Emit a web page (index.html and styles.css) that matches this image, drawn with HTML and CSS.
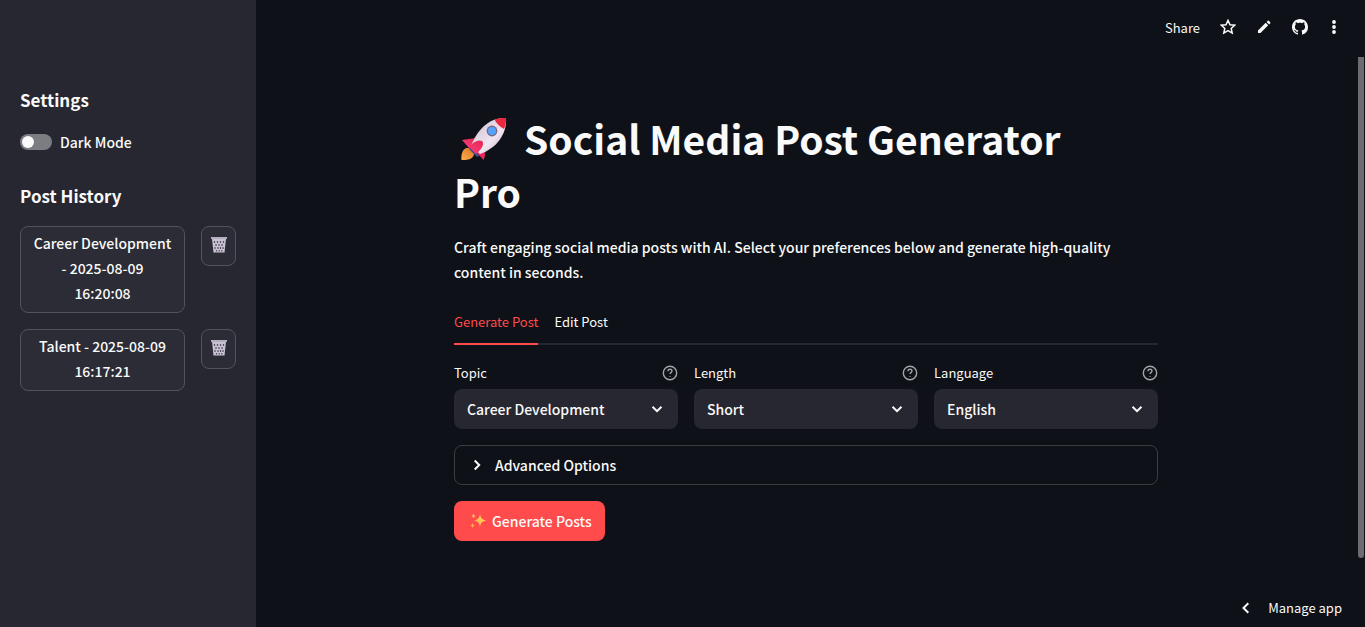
FILE: index.html
```html
<!DOCTYPE html>
<html lang="en">
<head>
<meta charset="utf-8">
<title>Social Media Post Generator Pro</title>
<link rel="stylesheet" href="styles.css">
</head>
<body>
<svg class="defs" width="0" height="0" aria-hidden="true">
  <defs>
    <linearGradient id="body" x1="0" y1="0" x2="1" y2="1"><stop offset="0.2" stop-color="#d9c8d8"/><stop offset="0.6" stop-color="#f0e5f0"/><stop offset="1" stop-color="#b9a8c0"/></linearGradient>
    <linearGradient id="flame" x1="1" y1="0" x2="0" y2="1"><stop offset="0" stop-color="#d9702a"/><stop offset="1" stop-color="#ffb04a"/></linearGradient>
    <linearGradient id="fin" x1="1" y1="0" x2="0" y2="1"><stop offset="0" stop-color="#e2284f"/><stop offset="1" stop-color="#ff3d83"/></linearGradient>
    <linearGradient id="spark" x1="1" y1="0" x2="0" y2="1"><stop offset="0" stop-color="#ffe45c"/><stop offset="1" stop-color="#ff9f4d"/></linearGradient>
    <symbol id="help" viewBox="0 0 16 16"><circle cx="8" cy="8" r="6.7"/><path d="M6 6.2C6 4.9 6.9 4.3 8 4.3s2 .7 2 1.8c0 1.4-2 1.600-2 3"/><path d="M8 11v.8"/></symbol>
    <symbol id="down" viewBox="0 0 12 12"><path d="M1.500 3.700 6 8.200l4.500-4.500"/></symbol>
    <symbol id="trash" viewBox="0 0 18 18">
      <path d="M2 2.500h14l-1.500 14h-11z" fill="#c9c2d4"/>
      <path d="M1 1h16v2H1z" fill="#b5aec0"/>
      <path d="M4.500 5v2M7.500 5v2M10.500 5v2M13.500 5v2M6 8v2M9 8v2M12 8v2M5 11v2M8 11v2M10.500 11v2M13 11v2M6.500 14v1.500M9.200 14v1.500M11.800 14v1.500" stroke="#55505f" stroke-width="1.200"/>
    </symbol>
  </defs>
</svg>
<div class="app">
  <aside class="sidebar">
    <h2 class="side-title">Settings</h2>
    <label class="toggle"><input type="checkbox" class="switch">Dark Mode</label>
    <h2 class="side-title">Post History</h2>
    <div class="history">
      <div class="history-row">
        <button class="btn history-item">Career Development - 2025-08-09 <span class="time">16:20:08</span></button>
        <button class="btn delete" aria-label="Delete post"><svg width="18" height="18"><use href="#trash"/></svg></button>
      </div>
      <div class="history-row">
        <button class="btn history-item">Talent - 2025-08-09 <span class="time">16:17:21</span></button>
        <button class="btn delete" aria-label="Delete post"><svg width="18" height="18"><use href="#trash"/></svg></button>
      </div>
    </div>
  </aside>
  <div class="page">
    <header class="toolbar">
      <button class="tool">Share</button>
      <button class="tool" aria-label="Favorite"><svg width="16" height="16" viewBox="0 0 16 16"><path d="m8 1.400 2 4.300 4.700.5-3.500 3.200 1 4.700L8 11.700l-4.200 2.400 1-4.700L1.300 6.200 6 5.700z" fill="none" stroke="#fafafa" stroke-width="1.500"/></svg></button>
      <button class="tool" aria-label="Edit"><svg width="16" height="16" viewBox="0 0 16 16" fill="#fafafa"><path d="M2 14v-2.500l7.700-7.700 2.500 2.500L4.500 14zM10.600 2.900l1-1c.4-.4 1-.4 1.300 0l1.200 1.200c.4.4.4 1 0 1.300l-1 1z"/></svg></button>
      <button class="tool" aria-label="View source"><svg width="16" height="16" viewBox="0 0 16 16" fill="#fafafa"><path d="M8 0C3.580 0 0 3.580 0 8c0 3.540 2.290 6.530 5.470 7.590.4.070.55-.17.55-.38 0-.19-.01-.82-.01-1.490-2.010.37-2.530-.49-2.690-.94-.09-.23-.48-.94-.82-1.130-.28-.15-.68-.52-.01-.53.63-.01 1.080.58 1.230.82.72 1.210 1.870.87 2.330.66.070-.52.28-.87.51-1.070-1.780-.2-3.640-.89-3.640-3.950 0-.87.31-1.590.82-2.150-.08-.2-.36-1.020.08-2.120 0 0 .67-.21 2.200.82.64-.18 1.320-.27 2-.27s1.360.09 2 .27c1.530-1.040 2.200-.82 2.200-.82.44 1.100.16 1.920.08 2.120.51.56.82 1.270.82 2.150 0 3.070-1.870 3.750-3.650 3.950.29.25.54.73.54 1.480 0 1.070-.01 1.930-.01 2.200 0 .21.15.46.55.38A8.010 8.010 0 0 0 16 8c0-4.420-3.580-8-8-8z"/></svg></button>
      <button class="tool" aria-label="Menu"><svg width="12" height="16" viewBox="0 0 12 16" fill="#fafafa"><circle cx="6" cy="3" r="1.900"/><circle cx="6" cy="8" r="1.900"/><circle cx="6" cy="13" r="1.900"/></svg></button>
    </header>
    <main class="content">
      <h1 class="title"><svg class="rocket" role="img" aria-label="Rocket" width="46" height="44" viewBox="0 0 46 44">
        <path d="M5 31C1 33 0 38 .5 43c5 .4 10-.5 12-4l1-4-4-4z" fill="url(#flame)"/>
        <path d="m9 29 11 9-4 2-8-8z" fill="#424b82"/>
        <path d="M15 21 1 23l7 8 7-3z" fill="url(#fin)"/>
        <path d="M22 30c2 4 3 8 .5 13l-8-9z" fill="#ee2560"/>
        <path d="M45 1C31 0 17 10 10 29l9 8C36 31 46 17 45 1z" fill="url(#body)"/>
        <path d="M45 1c-4-.4-8 .2-11.500 1.600 2 4 5.500 7.500 9.500 9.400C44.800 8 45.300 4.500 45 1z" fill="#e92840"/>
        <path d="M8 30c3-4 9-8 13-6 3 3-1 9-6 13z" fill="url(#fin)"/>
        <circle cx="31" cy="14" r="5.400" fill="#756985"/><circle cx="31" cy="14" r="4" fill="#53a4ff"/>
      </svg>Social Media Post Generator Pro</h1>
      <p class="intro">Craft engaging social media posts with AI. Select your preferences below and generate high-quality content in seconds.</p>
      <div class="tabs" role="tablist">
        <button class="tab tab-active" role="tab" aria-selected="true">Generate Post</button>
        <button class="tab" role="tab" aria-selected="false">Edit Post</button>
      </div>
      <div class="fields">
        <div class="field">
          <div class="field-head"><label for="topic">Topic</label><svg class="help" width="16" height="16"><use href="#help"/></svg></div>
          <div class="select-box"><select id="topic"><option>Career Development</option></select><svg class="chevron" width="12" height="12"><use href="#down"/></svg></div>
        </div>
        <div class="field">
          <div class="field-head"><label for="length">Length</label><svg class="help" width="16" height="16"><use href="#help"/></svg></div>
          <div class="select-box"><select id="length"><option>Short</option></select><svg class="chevron" width="12" height="12"><use href="#down"/></svg></div>
        </div>
        <div class="field">
          <div class="field-head"><label for="language">Language</label><svg class="help" width="16" height="16"><use href="#help"/></svg></div>
          <div class="select-box"><select id="language"><option>English</option></select><svg class="chevron" width="12" height="12"><use href="#down"/></svg></div>
        </div>
      </div>
      <button class="expander" aria-expanded="false"><svg class="arrow" width="12" height="12" viewBox="0 0 12 12"><path d="M3.700 1.500 8.200 6l-4.500 4.500"/></svg>Advanced Options</button>
      <button class="primary"><svg width="16" height="16" viewBox="0 0 16 16" fill="url(#spark)"><path d="M10 1c.9 4.300 1.500 5.200 6 6.500-4.500 1.300-5.100 2.200-6 6.500-.9-4.300-1.500-5.200-6-6.500 4.500-1.300 5.100-2.200 6-6.500z"/><path d="M3.500.5c.4 1.700.8 2.100 2.500 2.500-1.700.4-2.100.8-2.500 2.500C3.100 3.800 2.700 3.400 1 3c1.700-.4 2.100-.8 2.500-2.500zM2.500 10c.4 1.700.8 2.100 2.500 2.500-1.700.4-2.100.8-2.500 2.500-.4-1.700-.8-2.100-2.500-2.500 1.700-.4 2.100-.8 2.500-2.500z"/></svg>Generate Posts</button>
    </main>
    <button class="manage"><svg class="arrow" width="12" height="12" viewBox="0 0 12 12"><path d="M8.300 1.200 3.500 6l4.800 4.800"/></svg>Manage app</button>
    <div class="scroll-thumb"></div>
  </div>
</div>
</body>
</html>
```
FILE: styles.css
```css
* { box-sizing: border-box; }
body {
  margin: 0;
  background: #0e1117;
  color: #fafafa;
  font-family: "Source Sans Pro", "Noto Sans CJK SC", sans-serif;
  font-size: 14px;
  font-weight: 500;
  line-height: 25px;
}
button, select, input { font: inherit; color: inherit; }
button { border: 0; padding: 0; background: none; cursor: pointer; }
.defs { position: absolute; }
.app { display: flex; min-height: 100vh; }

.sidebar { flex: 0 0 256px; background: #262730; padding: 85px 20px 20px; }
.side-title { margin: 0 0 15px; font-size: 17px; line-height: 30px; font-weight: 700; }
.toggle { display: flex; align-items: center; gap: 8px; height: 24px; margin-bottom: 27px; }
.switch {
  appearance: none;
  width: 32px;
  height: 16px;
  margin: 0;
  padding: 2px;
  border-radius: 8px;
  background: #7c7d83;
}
.switch::before { content: ""; display: block; width: 12px; height: 12px; border-radius: 50%; background: #fafafa; }
.history { display: flex; flex-direction: column; gap: 16px; }
.history-row { display: flex; align-items: flex-start; gap: 16px; }
.btn { border: 1px solid #52535b; border-radius: 8px; background: #2b2c36; }
.history-item { flex: 1; min-width: 0; padding: 4px 12px 6px; }
.time { display: block; }
.delete { display: flex; align-items: center; justify-content: center; width: 35px; height: 40px; padding-bottom: 2px; }

.page { position: relative; flex: 1; min-width: 0; padding-right: 9px; }
.toolbar { display: flex; align-items: center; justify-content: flex-end; gap: 20px; height: 54px; padding-right: 16px; font-size: 13px; font-weight: 400; }
.tool { display: flex; align-items: center; }
.tool:last-child { width: 12px; }
.content { max-width: 704px; margin: 0 auto; padding: 58px 0 80px; }
.title { margin: 0 0 17px; padding-right: 32px; font-size: 39px; line-height: 53px; font-weight: 700; }
.rocket { margin: 0 17px 0 7px; vertical-align: -6px; }
.intro { margin: 0 0 18px; padding-right: 16px; }
.tabs { display: flex; gap: 16px; border-bottom: 2px solid #262730; margin-bottom: 16px; font-size: 13px; font-weight: 400; }
.tab { height: 42px; margin-bottom: -2px; padding-bottom: 4px; border-bottom: 2px solid transparent; }
.tab-active { color: #ff4b4b; border-bottom-color: #ff4b4b; }
.fields { display: grid; grid-template-columns: repeat(3, 1fr); gap: 16px; }
.field-head { display: flex; align-items: center; justify-content: space-between; height: 23px; margin-bottom: 5px; font-size: 13px; font-weight: 400; }
.help { fill: none; stroke: #a3a4a8; stroke-width: 1.4px; }
.select-box { position: relative; }
.select-box select { appearance: none; width: 100%; height: 40px; padding: 0 36px 0 13px; border: 0; border-radius: 8px; background: #262730; }
.chevron { position: absolute; right: 15px; top: 14px; pointer-events: none; }
.chevron, .arrow { fill: none; stroke: #fafafa; stroke-width: 2px; }
.expander { display: flex; align-items: center; gap: 12px; width: 100%; height: 40px; margin: 16px 0; padding: 0 16px; border: 1px solid #3b3d43; border-radius: 8px; }
.primary { display: flex; align-items: center; gap: 6px; height: 40px; padding: 0 13px 0 16px; border-radius: 8px; background: #ff4b4b; }
.manage { position: absolute; right: 23px; bottom: 7px; display: flex; align-items: center; gap: 16px; font-size: 13px; font-weight: 400; }
.scroll-thumb { position: absolute; top: 57px; bottom: 69px; right: 1px; width: 6px; border-radius: 0 0 3px 3px; background: #6b6d71; }
```
